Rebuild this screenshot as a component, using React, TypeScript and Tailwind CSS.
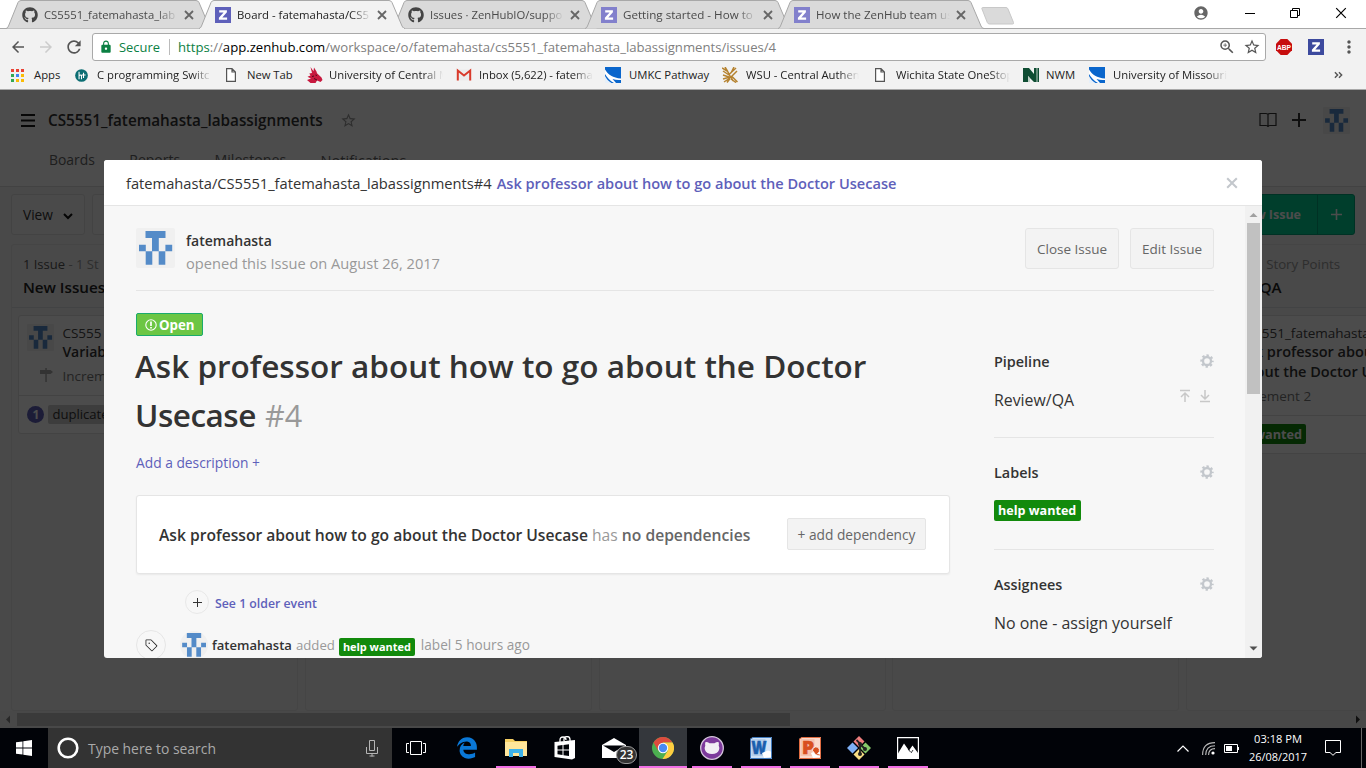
import React from 'react';
import { FaGithub, FaEdgeLegacy } from 'react-icons/fa';
import { MdAccountCircle, MdZoomIn, MdStarBorder, MdLock, MdArrowBack, MdArrowForward, MdRefresh, MdMoreVert } from 'react-icons/md';
import { GoTag } from 'react-icons/go';

const FADE = '[mask-image:linear-gradient(to_right,black_calc(100%_-_20px),transparent)]';

function Identicon({ className }: { className: string }) {
  return (
    <svg viewBox="0 0 39 40" className={className} preserveAspectRatio="none">
      <rect width="39" height="40" rx="2" fill="#f0f0f0" />
      <path
        fill="#548bc8"
        d="M9.500 3h20v7h-20z M16 9.800h6.800v13.500h-6.800z M3 16.700h6.800v6.600H3z M29.400 16.700h6.800v6.600h-6.800z M9.700 23.300h6.600v13.500h-6.600z M22.700 23.300h6.600v13.500h-6.600z"
      />
    </svg>
  );
}

function ZLogo({ className }: { className: string }) {
  return (
    <svg viewBox="0 0 16 16" className={className}>
      <rect width="16" height="16" fill="currentColor" />
      <path d="M4.200 3.300h7.700v2L7.300 10.500h4.800v2.200H3.900v-2l4.700-5.200H4.200z" fill="#fff" />
    </svg>
  );
}

function Close({ className }: { className: string }) {
  return (
    <svg viewBox="0 0 10 10" className={className} fill="none" stroke="currentColor">
      <path d="M1 1l8 8M9 1l-8 8" />
    </svg>
  );
}

type TabProps = { title: string; kind: 'github' | 'zenhub'; active?: boolean; text: string };

function Tab({ title, kind, active, text }: TabProps) {
  return (
    <div className={`relative -mr-[13px] flex h-[29px] w-[206px] shrink-0 items-center pl-4 ${active ? 'z-10' : ''}`}>
      <svg viewBox="0 0 206 29" className="absolute inset-0 h-full w-full">
        <path
          d="M0 28.500 Q1.500 28.500 2.500 26 L12 2.500 Q13 .5 15 .5 H190 Q192 .5 193 2.500 L203 26 Q204 28.500 206 28.500"
          fill={active ? '#f2f2f2' : '#dadada'}
          stroke="#a8a8a8"
        />
        {active && <path d="M1 28.500H205" stroke="#f2f2f2" />}
      </svg>
      <div className="relative flex items-center">
        {kind === 'github' ? (
          <FaGithub className="h-4 w-4 text-[#444]" />
        ) : (
          <ZLogo className={active ? 'h-4 w-4 text-[#5e60ba]' : 'h-4 w-4 text-[#8280cc]'} />
        )}
        <span className={`ml-1.5 w-[134px] overflow-hidden whitespace-nowrap leading-5 ${text} ${active ? 'text-[#222]' : 'text-[#4a4a4a]'} ${FADE}`}>
          {title}
        </span>
        <Close className="ml-[6px] h-[10px] w-[10px] stroke-[1.800] text-[#666]" />
      </div>
    </div>
  );
}

function PageIcon() {
  return (
    <svg viewBox="0 0 10 14" className="ml-[2px] mr-[5px] h-[14px] w-[10px]" fill="#fff" stroke="#555">
      <path d="M.6.6h5.400l3.400 3.400v9.400H.6z M6 .6v3.400h3.400" strokeWidth="1.200" />
    </svg>
  );
}

function SwooshIcon() {
  return (
    <svg viewBox="0 0 16 16" className="h-4 w-4">
      <rect width="16" height="16" fill="#0a66cc" />
      <path d="M0 2.500C3 7.500 8 11 16 11.500V13c-3 .3-6 0-8.500-1L11 16H9C5 14 2 10.500 0 7z" fill="#fff" />
      <path d="M0 9c1.500 3 3.500 5.200 6.500 7H0z" fill="#e6f0fa" />
    </svg>
  );
}

function Bookmark({ icon, label, box }: { icon: React.ReactNode; label: string; box: string }) {
  return (
    <div className="flex shrink-0 items-center gap-1.5">
      {icon}
      <span className={`overflow-hidden whitespace-nowrap text-[11.300px] leading-5 text-[#222] ${box}`}>{label}</span>
    </div>
  );
}

function Browser() {
  return (
    <div className="h-[90px] w-full border-b border-[#a9a9a9] bg-[#f2f2f2] text-black">
      <div className="flex h-[29px] items-start bg-white shadow-[inset_0_-1px_0_#a8a8a8]">
        <div className="flex pl-[6px]">
          <Tab kind="github" title="CS5551_fatemahasta_lab" text="text-[11.300px]" />
          <Tab kind="zenhub" title="Board - fatemahasta/CS5" text="text-[11.350px]" active />
          <Tab kind="github" title="Issues · ZenHubIO/suppo" text="text-[11.300px]" />
          <Tab kind="zenhub" title="Getting started - How to" text="text-[11.640px]" />
          <Tab kind="zenhub" title="How the ZenHub team us" text="text-[11.500px]" />
        </div>
        <svg viewBox="0 0 34 18" className="ml-[10px] mt-[7px] h-[18px] w-[34px]">
          <path d="M1.500.5H25q1.500 0 2 1.500l5.500 13.500q.5 1.500-1 1.500H8.500Q7 17 6.300 15.500L1 2Q.5.5 1.500.5z" fill="#dadada" stroke="#c8c8c8" />
        </svg>
        <div className="ml-auto flex h-[26px] items-center pr-[19px]">
          <MdAccountCircle className="mr-[35px] h-4 w-4 text-[#666]" />
          <svg viewBox="0 0 12 12" className="mr-[33px] h-3 w-3"><path d="M1 6.500h10" stroke="#000" /></svg>
          <svg viewBox="0 0 12 12" className="mr-[34px] h-3 w-3" fill="none" stroke="#000"><path d="M1.500 3.500h7v7h-7z M3.500 3.500v-2h7v7h-2" /></svg>
          <Close className="h-[12px] w-[12px] stroke-[1] text-black" />
        </div>
      </div>
      <div className="flex h-[36px] items-center pl-[9px]">
        <MdArrowBack className="h-[18px] w-[18px] text-[#555]" />
        <MdArrowForward className="ml-[10px] h-[18px] w-[18px] text-[#ccc]" />
        <MdRefresh className="ml-[9px] h-[20px] w-[20px] text-[#555]" />
        <div className="ml-[8px] flex h-[28px] w-[1174px] items-center rounded-[3px] border border-[#a9a9a9] bg-white pl-[6px]">
          <MdLock className="h-[14px] w-[14px] text-[#0b8043]" />
          <span className="ml-[6px] w-[50px] whitespace-nowrap text-[12.900px] leading-5 text-[#0b8043]">Secure</span>
          <span className="mr-[8px] h-4 w-px bg-[#bbb]" />
          <span className="whitespace-nowrap text-[13.150px] leading-5 text-[#808080]">
            <span className="text-[#0b8043]">https</span>://<span className="text-black">app.zenhub.com</span>/workspace/o/fatemahasta/cs5551_fatemahasta_labassignments/issues/4
          </span>
          <MdZoomIn className="ml-auto h-[18px] w-[18px] text-[#555]" />
          <MdStarBorder className="ml-[7px] mr-[4px] h-[18px] w-[18px] text-[#555]" />
        </div>
        <svg viewBox="0 0 16 16" className="ml-[10px] h-4 w-4">
          <path d="M4.700 0h6.600L16 4.700v6.600L11.300 16H4.700L0 11.300V4.700z" fill="#c70d0d" />
          <text x="8" y="10.800" fontSize="8" fontWeight="700" textAnchor="middle" fill="#fff" fontFamily="Liberation Sans, sans-serif" textLength="14" lengthAdjust="spacingAndGlyphs">ABP</text>
        </svg>
        <ZLogo className="ml-4 h-4 w-4 text-[#3d4a9e]" />
        <MdMoreVert className="ml-[15px] h-5 w-5 text-[#555]" />
      </div>
      <div className="flex h-[20px] items-center pl-[10px]">
        <div className="flex items-center">
          <svg viewBox="0 0 13 13" className="mr-[10px] h-[13px] w-[14px]" shapeRendering="crispEdges">
            <path d="M0 0h3v3H0zM5 0h3v3H5zM10 0h3v3h-3z" fill="#ea4335" />
            <path d="M0 5h3v3H0zM0 10h3v3H0z" fill="#34a853" />
            <path d="M5 5h3v3H5z" fill="#4285f4" />
            <path d="M10 5h3v3h-3zM5 10h3v3H5zM10 10h3v3h-3z" fill="#fbbc05" />
          </svg>
          <span className="w-[41px] text-[11.300px] leading-5 text-[#222]">Apps</span>
        </div>
        <Bookmark
          icon={
            <svg viewBox="0 0 16 16" className="mr-[3px] h-[13px] w-[13px]">
              <circle cx="8" cy="8" r="7.800" fill="#0c6e73" />
              <path d="M5 3.500v9M5 8.500q1.500-2 3 0v4M10.500 4.500v6.500M8 7.500h5" stroke="#fff" strokeWidth="1.300" fill="none" />
            </svg>
          }
          label="C programming Switc"
          box={`w-[115px] ${FADE}`}
        />
        <div className="ml-[12px]" />
        <Bookmark icon={<PageIcon />} label="New Tab" box="w-[48px] tracking-[-0.050px]" />
        <div className="ml-[12px]" />
        <Bookmark
          icon={
            <svg viewBox="0 0 16 16" className="h-4 w-4">
              <path d="M3.500 0l3 4.200L7 .5l2.500 4 .5 1.800 4.500 4.200 1 2.500-2 2-3.500-1.500-1.500 2.500H3.500L0 13l4-1.500-3.500-1.800 3-1.200-1.200-2L5 6z" fill="#c8193f" />
              <path d="M8.500 8l1.500.5M7 11.500l3 1.500M5 9.500l2-.5" stroke="#4a0b1c" />
            </svg>
          }
          label="University of Central M"
          box={`w-[114px] ${FADE}`}
        />
        <div className="ml-[13px]" />
        <Bookmark
          icon={
            <svg viewBox="0 0 16 16" className="mr-[1px] h-4 w-4">
              <path d="M1 2.500h14v11H1z" fill="#ececec" />
              <path d="M1.800 13.500v-10L8 8.500l6.200-5v10" fill="none" stroke="#d93a2b" strokeWidth="2" />
            </svg>
          }
          label="Inbox (5,622) - fatema"
          box={`w-[114px] tracking-[-0.050px] ${FADE}`}
        />
        <div className="ml-[12px]" />
        <Bookmark icon={<SwooshIcon />} label="UMKC Pathway" box="w-[81px] ml-[2px]" />
        <div className="ml-[12px]" />
        <Bookmark
          icon={
            <svg viewBox="0 0 16 16" className="h-4 w-4" fill="none" stroke="#b5822f" strokeWidth="1.500">
              <path d="M0 1l5 3M3 0l3 5M9 6l3-6M6.500 8L14 1M9 10l6-6M1 8l6 2M1 12l7-2M2 15l6-4M5 15.500l3-4M9 10l2 4M10 9.500l5.500 5.500M6 5l3 6M1 4l6 4M9 12l5 3.500" />
            </svg>
          }
          label="WSU - Central Authen"
          box={`w-[113px] ml-[2px] ${FADE}`}
        />
        <div className="ml-[14px]" />
        <Bookmark icon={<PageIcon />} label="Wichita State OneStop" box={`w-[114px] ${FADE}`} />
        <div className="ml-[13px]" />
        <Bookmark
          icon={
            <svg viewBox="0 0 16 16" className="h-4 w-4">
              <path d="M0 1h6l5 6V1h5v14h-5L5 9v6H0z" fill="#0f4d33" />
              <path d="M5 9v6h2v-3.500zM13.500 1v14h1V1z" fill="#bcd0c5" />
            </svg>
          }
          label="NWM"
          box="w-[32px] ml-[1px]"
        />
        <div className="ml-[11px]" />
        <Bookmark icon={<SwooshIcon />} label="University of Missouri" box={`w-[114px] ml-[2px] ${FADE}`} />
        <svg viewBox="0 0 10 8" className="ml-auto mr-[23px] h-[8px] w-[9px]" fill="none" stroke="#555" strokeWidth="1.600">
          <path d="M1 1l3 3-3 3M5.500 1l3 3-3 3" />
        </svg>
      </div>
    </div>
  );
}

function Column({ children }: { children?: React.ReactNode }) {
  return <div className="h-[467px] w-[287px] shrink-0 rounded-[3px] border border-[#e6e6e6] bg-[#f3f3f3]">{children}</div>;
}

function Workspace() {
  return (
    <div className="flex h-[638px] w-full flex-col overflow-hidden bg-[#f3f3f3] text-[#333]">
      <div className="flex h-[97px] flex-col border-b border-[#dcdcdc] bg-white">
        <div className="flex h-[60px] items-center pl-[19px] pr-[16px]">
          <svg viewBox="0 0 14 13" className="ml-[2px] h-[13px] w-[14px]" stroke="#1a1a1a" strokeWidth="2"><path d="M0 1h14M0 6.500h14M0 12h14" /></svg>
          <span className="ml-[13px] whitespace-nowrap text-[15.280px] font-semibold leading-6">CS5551_fatemahasta_labassignments</span>
          <MdStarBorder className="ml-[17px] h-[17px] w-[17px] text-[#999]" />
          <svg viewBox="0 0 18 16" className="ml-auto h-[16px] w-[18px]" fill="none" stroke="#333" strokeWidth="1.200">
            <path d="M1 1.500h6q2 0 2 1 0-1 2-1h6v12h-6q-2 0-2 1.500 0-1.500-2-1.500H1zM9 2.500v12" />
          </svg>
          <svg viewBox="0 0 14 14" className="ml-[15px] h-[14px] w-[14px]" stroke="#333" strokeWidth="2"><path d="M7 0v14M0 7h14" /></svg>
          <Identicon className="ml-[17px] h-[27px] w-[27px]" />
        </div>
        <div className="flex gap-[34.400px] pl-[49px] text-[13.900px] leading-5 text-[#666]">
          <span>Boards</span><span className="text-[14px]">Reports</span><span className="text-[14.200px]">Milestones</span><span className="text-[14.600px]">Notifications</span>
        </div>
      </div>
      <div className="flex h-[57px] items-start pl-[11px] pr-[11px] pt-[7px]">
        <div className="flex h-[41px] w-[74px] items-center rounded-[3px] border border-[#e0e0e0] bg-[#f8f8f8] pl-[11px] text-[13.700px] leading-5">
          View
          <svg viewBox="0 0 10 7" className="ml-[10px] mt-[3px] h-[7px] w-[10px]" fill="none" stroke="#111" strokeWidth="2"><path d="M1 1l4 4 4-4" /></svg>
        </div>
        <div className="ml-[7px] h-[41px] w-[90px] rounded-[3px] border border-[#e0e0e0] bg-[#f8f8f8]" />
        <div className="ml-auto flex h-[41px] rounded-[3px] border border-[#00a578] bg-[#00d095] text-white">
          <div className="flex items-center pl-3 pr-[16px] text-[12.500px] font-bold leading-5">New Issue</div>
          <div className="flex w-[37px] items-center justify-center border-l border-[#00a578]">
            <svg viewBox="0 0 11 11" className="h-[11px] w-[11px]" stroke="#fff" strokeWidth="1.600"><path d="M5.500 0v11M0 5.500h11" /></svg>
          </div>
        </div>
      </div>
      <div className="flex w-[1480px] gap-[6.700px] pl-[11.400px]">
        <Column>
          <div className="h-[63px] border-b border-[#dcdfe3] pl-[10.500px] pt-[9px]">
            <div className="whitespace-nowrap text-[13px] leading-5 text-[#999]"><span className="text-[#555]">1 Issue</span> - 1 St</div>
            <div className="mt-px text-[15.200px] font-semibold leading-6 text-[#222]">New Issues</div>
          </div>
          <div className="ml-[6px] mt-[7px] w-[272px] rounded-[3px] border border-[#e0e0e0] bg-white">
            <div className="flex h-[79px] pl-[8px] pt-[8px]">
              <Identicon className="h-[27px] w-[27px]" />
              <div className="ml-[8px] whitespace-nowrap text-[13.500px]">
                <div className="leading-[19px] text-[#444]">CS555</div>
                <div className="text-[14px] font-semibold leading-[18px]">Variab</div>
                <div className="-ml-[24px] mt-[6px] flex items-center leading-[19px] text-[#777]">
                  <svg viewBox="0 0 13 14" className="mb-[3px] ml-[2px] mr-[9px] h-[14px] w-[13px]" fill="#aaa"><path d="M0 2h10.500l2.500 2-2.500 2H0zM5.300 0h1.500v14H5.300z" /></svg>
                  Increm
                </div>
              </div>
            </div>
            <div className="flex h-[38px] items-center border-t border-[#e0e0e0] pl-[8px]">
              <span className="flex h-[17px] w-[17px] items-center justify-center rounded-full bg-[#5e60ba] text-[12px] font-bold text-white">1</span>
              <span className="ml-[4px] rounded-[2px] bg-[#ccc] px-[4px] text-[13.100px] font-medium leading-[19px] text-[#333]">duplicate</span>
            </div>
          </div>
        </Column>
        <Column /><Column /><Column />
        <Column>
          <div className="h-[63px] border-b border-[#dcdfe3] pl-[11px] pt-[9px]">
            <div className="whitespace-nowrap pl-[68px] text-[13.270px] leading-5 text-[#999]">Story Points</div>
            <div className="mt-px whitespace-nowrap pl-[4px] text-[15.100px] font-semibold leading-6 text-[#222]">Review/QA</div>
          </div>
          <div className="ml-[6px] mt-[7px] w-[272px] rounded-[3px] border border-[#e0e0e0] bg-white">
            <div className="flex h-[99px] pl-[8px] pt-[8px]">
              <Identicon className="h-[27px] w-[27px]" />
              <div className="ml-[9px] whitespace-nowrap text-[13.500px]">
                <div className="leading-[18px] text-[#444]">CS5551_fatemahasta_</div>
                <div className="text-[14.500px] font-semibold leading-[19.500px]">Ask professor about<br />about the Doctor Use</div>
                <div className="mt-[6px] -ml-[3px] leading-[19px] text-[#777]">Increment 2</div>
              </div>
            </div>
            <div className="flex h-[38px] items-center border-t border-[#e0e0e0] pl-[25px]">
              <span className="mb-[1px] rounded-[2px] bg-[#128a0c] px-[4px] text-[12.700px] font-bold leading-[20px] text-white">help wanted</span>
            </div>
          </div>
        </Column>
      </div>
      <div className="mt-auto flex h-[17px] items-center bg-[#f1f1f1]">
        <svg viewBox="0 0 17 17" className="h-[17px] w-[17px]"><path d="M6 8.500l4-4v8z" fill="#888" /></svg>
        <div className="h-[13px] w-[773px] bg-[#c1c1c1]" />
        <svg viewBox="0 0 17 17" className="ml-auto h-[17px] w-[17px]"><path d="M11 8.500l-4-4v8z" fill="#333" /></svg>
      </div>
    </div>
  );
}

function SideTitle({ children }: { children: React.ReactNode }) {
  return (
    <div className="flex h-5 items-center justify-between text-[14.400px] font-semibold leading-5">
      {children}
      <svg viewBox="0 0 14 14" className="mb-[3px] h-[14px] w-[14px]" fill="none" stroke="#c3c7cc">
        <circle cx="7" cy="7" r="4" strokeWidth="2.300" />
        <circle cx="7" cy="7" r="5.700" strokeWidth="2" strokeDasharray="2.400 2.076" strokeDashoffset="1.200" />
      </svg>
    </div>
  );
}

function Modal() {
  return (
    <div className="absolute left-[104px] top-[70px] flex h-[498px] w-[1158px] flex-col overflow-hidden rounded-[3px] bg-[#f7f7f7] text-[#333]">
      <div className="flex h-[46px] shrink-0 items-center border-b border-[#e5e5e5] bg-white pl-[22px] pr-[24px] leading-5">
        <span className="whitespace-nowrap text-[14.700px] font-medium">fatemahasta/CS5551_fatemahasta_labassignments#4</span>
        <span className="ml-[5px] whitespace-nowrap text-[14.580px] font-semibold text-[#5e60ba]">Ask professor about how to go about the Doctor Usecase</span>
        <Close className="ml-auto h-[12px] w-[12px] stroke-[1.700] text-[#c3c7cc]" />
      </div>
      <div className="flex min-h-0 flex-1">
        <div className="flex w-[1141px] flex-col overflow-hidden pl-[32px] pr-[31px] pt-[22px]">
          <div className="flex h-[63px] shrink-0 items-start border-b border-[#e5e5e5]">
            <Identicon className="h-[40px] w-[39px]" />
            <div className="ml-[11px] pt-[2px]">
              <div className="text-[14px] font-semibold leading-[22px]">fatemahasta</div>
              <div className="text-[14.630px] leading-[23px] text-[#999]">opened this Issue on August 26, 2017</div>
            </div>
            <button className="ml-auto h-[41px] w-[94px] rounded-[3px] border border-[#e5e5e5] bg-[#f3f3f3] pt-[2px] text-[13.490px] text-[#666]">Close Issue</button>
            <button className="ml-[11px] h-[41px] w-[84px] rounded-[3px] border border-[#e5e5e5] bg-[#f3f3f3] pt-[2px] text-[13.500px] text-[#666]">Edit Issue</button>
          </div>
          <div className="flex">
            <div className="w-[814px] pt-[22px]">
              <div className="flex h-[23px] w-[67px] items-center rounded-[2px] border border-[#1aab6c] bg-[#6cc644] pl-[8px] text-[13.300px] font-bold leading-5 text-white">
                <svg viewBox="0 0 12 12" className="mr-[2px] h-[12px] w-[12px]" fill="none" stroke="#fff">
                  <circle cx="6" cy="6" r="5.200" strokeWidth="1.100" /><path d="M6 2.500v4.500M6 8v1.600" strokeWidth="1.700" />
                </svg>
                Open
              </div>
              <h1 className="-ml-px mt-[5px] h-[98px] whitespace-nowrap text-[31.500px] font-semibold leading-[49px]">
                Ask professor about how to go about the Doctor<br /><span className="tracking-[-0.500px]">Usecase</span> <span className="ml-px text-[30.500px] font-normal leading-none text-[#999]">#4</span>
              </h1>
              <div className="mt-[14px] text-[13.790px] leading-5 text-[#5e60ba]">Add a description +</div>
              <div className="mt-[22px] flex h-[79px] items-center rounded-[3px] border border-[#e5e5e5] bg-white pl-[22px] pr-[23px] shadow-[0_1px_2px_rgba(0,0,0,0.06)]">
                <span className="whitespace-nowrap text-[15.650px] font-semibold leading-6">
                  Ask professor about how to go about the Doctor Usecase <span className="font-normal text-[#999]">has</span> <span className="text-[#666]">no dependencies</span>
                </span>
                <button className="ml-auto mb-px h-[32px] w-[139px] whitespace-nowrap rounded-[2px] border border-[#e5e5e5] bg-[#f3f3f3] pt-[2px] text-[13.730px] text-[#666]">+ add dependency</button>
              </div>
              <div className="ml-[49px] mt-[16px] flex h-[24px] items-center">
                <span className="flex h-[24px] w-[24px] items-center justify-center rounded-full border border-[#e8e8e8]">
                  <svg viewBox="0 0 9 9" className="h-[9px] w-[9px]" stroke="#333"><path d="M4.500 0v9M0 4.500h9" /></svg>
                </span>
                <span className="ml-[6px] mt-[3px] text-[12.300px] font-semibold leading-5 text-[#5e60ba]">See 1 older event</span>
              </div>
              <div className="mt-[16px] flex h-[30px] items-center whitespace-nowrap text-[13.400px] leading-5 text-[#999]">
                <span className="flex h-[30px] w-[30px] items-center justify-center rounded-full border border-[#e5e5e5]"><GoTag className="h-[13px] w-[13px] text-[#222]" /></span>
                <Identicon className="ml-[14px] h-[28px] w-[28px] rounded-full" />
                <span className="ml-[4px] text-[13.060px] font-semibold text-[#333]">fatemahasta</span>
                <span className="ml-[4px] text-[13.210px]">added</span>
                <span className="ml-[4px] mt-[3px] h-[18px] rounded-[2px] bg-[#128a0c] px-[4px] text-[10.930px] font-bold leading-[17px] text-white">help wanted</span>
                <span className="ml-[6px] text-[13.630px]">label 5 hours ago</span>
              </div>
            </div>
            <div className="ml-[44px] w-[220px] pt-[61px]">
              <div className="h-[86px] border-b border-[#e5e5e5]">
                <SideTitle>Pipeline</SideTitle>
                <div className="mt-[17px] flex items-center text-[15.860px] leading-5">
                  Review/QA
                  <svg viewBox="0 0 32 14" className="mb-[8px] ml-auto mr-[3px] h-[14px] w-[32px]" fill="none" stroke="#c8c8c8" strokeWidth="1.500">
                    <path d="M1 1.500h10M6 13V4M2 8l4-4 4 4M21 12.500h10M26 1v9M22 6l4 4 4-4" />
                  </svg>
                </div>
              </div>
              <div className="h-[112px] border-b border-[#e5e5e5] pt-[25px]">
                <SideTitle>Labels</SideTitle>
                <span className="mt-[17px] inline-block h-[21px] w-[87px] rounded-[2px] bg-[#128a0c] px-[4px] text-[12.600px] font-bold leading-[22px] text-white">help wanted</span>
              </div>
              <div className="pt-[25px]">
                <SideTitle>Assignees</SideTitle>
                <div className="mt-[18px] text-[15.950px] leading-5">No one - assign yourself</div>
              </div>
            </div>
          </div>
        </div>
        <div className="flex w-[17px] flex-col items-center bg-[#f1f1f1]">
          <svg viewBox="0 0 17 17" className="h-[17px] w-[17px]"><path d="M8.500 7l4 4h-8z" fill="#a0a0a0" /></svg>
          <div className="h-[171px] w-[13px] bg-[#c1c1c1]" />
          <svg viewBox="0 0 17 17" className="mt-auto h-[17px] w-[17px]"><path d="M8.500 9.500l4-4h-8z" fill="#505050" /></svg>
        </div>
      </div>
    </div>
  );
}

function Task({ children, open, active }: { children: React.ReactNode; open?: boolean; active?: boolean }) {
  return (
    <div className={`flex h-full w-[48px] shrink-0 flex-col items-center ${active ? 'bg-[#34373c]' : ''}`}>
      <div className="flex flex-1 items-center justify-center pt-[2px]">{children}</div>
      {open && <div className={`h-[2px] bg-[#f06fe4] ${active ? 'w-[48px]' : 'w-[40px]'}`} />}
      {!open && <div className="h-[2px]" />}
    </div>
  );
}

function OfficeIcon({ letter, color, light }: { letter: string; color: string; light: string }) {
  return (
    <svg viewBox="0 0 22 22" className="h-[22px] w-[22px]">
      <path d="M0 2L3 0h19v22H0z" fill={light} />
      <path d="M1.500 2h14v17h-14z" fill={color} opacity=".15" />
      <text x="9" y="16.500" textAnchor="middle" fontFamily="Open Sans, sans-serif" fontSize="18" fontWeight="800" fill={color} stroke={color} strokeWidth=".6" textLength={letter === 'W' ? 15 : 12} lengthAdjust="spacingAndGlyphs">{letter}</text>
      <path d="M12 16l6-2.500 4 1.500V20l-8 1z" fill="#fff" />
      {letter === 'P' && <path d="M13.500 13.500a3.500 3.500 0 1 1 5 3l3 1-1 1.500-4-1.500z" fill={color} stroke="#fff" strokeWidth=".8" />}
      <path d="M.5 2L3 .5h18.500v21H.5z" fill="none" stroke={color} opacity=".8" />
    </svg>
  );
}

function Taskbar() {
  return (
    <div className="flex h-[40px] w-full bg-[#010308] text-white">
      <div className="flex w-[48px] items-center justify-center">
        <svg viewBox="0 0 16 16" className="h-4 w-4" fill="#fff"><path d="M0 2.300l6.500-.9v6.200H0zM7.300 1.200L16 0v7.600H7.300zM0 8.400h6.500v6.200L0 13.700zM7.300 8.400H16V16l-8.700-1.200z" /></svg>
      </div>
      <div className="flex w-[344px] items-center bg-[#333] pl-[9px] pr-[14px]">
        <svg viewBox="0 0 22 22" className="h-[22px] w-[22px]" fill="none"><circle cx="11" cy="11" r="9.300" stroke="#fff" strokeWidth="2.600" /></svg>
        <span className="ml-[9px] mt-px text-[13.910px] leading-5 text-[#aaa]">Type here to search</span>
        <svg viewBox="0 0 12 17" className="ml-auto h-[17px] w-[12px]" fill="none" stroke="#b5b5b5">
          <path d="M3.500.5h5v10h-5zM.5 7v6.500h11V7M6 13.500v3M3.500 16h5" />
        </svg>
      </div>
      <div className="mr-[3px] flex"><Task>
        <svg viewBox="0 0 20 14" className="h-[14px] w-[20px]" fill="none" stroke="#fff"><path d="M4.500.500h11v13h-11zM3 2.500H.5v9H3M17 2.500h2.500v9H17" /></svg>
      </Task></div>
      <div className="flex gap-px">
        <Task><FaEdgeLegacy className="h-[22px] w-[22px] text-[#0a78d7]" /></Task>
        <Task open>
          <svg viewBox="0 0 22 20" className="h-[20px] w-[22px]">
            <path d="M0 1h8l2 2h12v15H0z" fill="#f5cf63" /><path d="M0 4h22v14H0z" fill="#ffe69b" />
            <path d="M4 19v-8h14v8h-4v-4H8v4z" fill="#3db2ea" />
          </svg>
        </Task>
        <Task>
          <svg viewBox="0 0 22 24" className="h-[24px] w-[22px]">
            <path d="M6 7V4q0-3 3-3t3 3M10 5V3.500Q10 .6 13 .6t3 3V5" fill="none" stroke="#fff" strokeWidth="1.300" />
            <path d="M.5 6L21 4v18l-3 1.500L.5 21z" fill="#fff" />
            <path d="M3.500 9.700l5-.6v4.400h-5zM9.500 9l5.500-.7v5.200H9.500zM3.500 14.500h5V19l-5-.7zM9.500 14.500H15V20l-5.500-.8z" fill="#010308" />
          </svg>
        </Task>
        <Task>
          <div className="relative">
            <svg viewBox="0 0 24 20" className="h-[20px] w-[24px]">
              <path d="M0 7L12 0l12 7v13H0z" fill="#fff" /><path d="M1 7.500h22L12 14z" fill="#010308" />
            </svg>
            <span className="absolute left-[14px] top-[8px] flex h-[18px] w-[21px] items-center justify-center rounded-full border border-[#999] bg-[#333] text-[12px] font-semibold leading-none">23</span>
          </div>
        </Task>
        <Task open active>
          <svg viewBox="0 0 22 22" className="h-[22px] w-[22px]">
            <circle cx="11" cy="11" r="11" fill="#4caf50" />
            <path d="M1.500 5.500A11 11 0 0 1 20.500 5.500H11L6.200 13.800z" fill="#dd4b3e" />
            <path d="M20.500 5.500A11 11 0 0 1 10.500 22L15.800 13.700 11 5.500z" fill="#ffcd40" />
            <circle cx="11" cy="11" r="5.200" fill="#fff" /><circle cx="11" cy="11" r="4.200" fill="#4a8af4" />
          </svg>
        </Task>
        <Task open>
          <svg viewBox="0 0 24 24" className="h-[24px] w-[24px]">
            <circle cx="12" cy="12" r="11.300" fill="#7d3a9c" stroke="#d5c5dc" strokeWidth="1.300" />
            <path d="M5.500 6q2-.3 4 1.300h5q2-1.600 4-1.300.8 2 .2 3.500 1 2 .3 4.500-1.500 4-7 4t-7-4q-.7-2.500.3-4.500-.6-1.500.2-3.500z" fill="#f2eef4" />
          </svg>
        </Task>
        <Task open><OfficeIcon letter="W" color="#1b5fae" light="#cfe2f6" /></Task>
        <Task open><OfficeIcon letter="P" color="#d9501e" light="#fbd9cb" /></Task>
        <Task open>
          <svg viewBox="0 0 24 24" className="h-[24px] w-[24px]">
            <path d="M12 0l5.500 5.500L12 11 6.500 5.500z" fill="#f07f7f" /><path d="M5.500 6.500L11 12l-5.500 5.500L0 12z" fill="#7eb0f5" />
            <path d="M18.500 6.500L24 12l-5.500 5.500L13 12z" fill="#86c96a" /><path d="M12 13l5.500 5.500L12 24l-5.500-5.500z" fill="#f8de84" />
            <path d="M9.500 4l3.500 3.500v10M13 8l5 5" stroke="#222" strokeWidth="1.800" fill="none" />
            <circle cx="13" cy="8" r="2" fill="#222" /><circle cx="13" cy="18" r="2" fill="#222" /><circle cx="18" cy="13" r="2" fill="#222" />
          </svg>
        </Task>
        <Task open>
          <svg viewBox="0 0 22 22" className="h-[22px] w-[22px]">
            <path d="M.6.6h20.800v20.800H.6z" fill="#010308" stroke="#fff" strokeWidth="1.200" />
            <path d="M1 16.500L7 6.500l5 7 3.500-5L21 16v5H1z" fill="#fff" />
            <path d="M11 12l2.500 3M16 13l-2 3" stroke="#010308" strokeWidth=".8" />
          </svg>
        </Task>
      </div>
      <div className="ml-auto flex items-center">
        <svg viewBox="0 0 12 7" className="h-[7px] w-[12px]" fill="none" stroke="#fff" strokeWidth="1.200"><path d="M.5 6.500L6 1l5.500 5.500" /></svg>
        <svg viewBox="0 0 13 13" className="ml-[13px] h-[13px] w-[13px]" fill="none" stroke="#bbb" strokeWidth="1.100">
          <path d="M.6 13Q.6.6 13 .6M3.700 13Q3.700 3.700 13 3.700M6.600 13q0-6.400 6.400-6.400" /><circle cx="11" cy="11" r="1.600" fill="#fff" stroke="none" />
        </svg>
        <svg viewBox="0 0 15 9" className="ml-[9px] h-[9px] w-[15px]"><path d="M.5.5h13v8H.5z" fill="none" stroke="#fff" /><path d="M2 2h6v5H2zM14 3h1v3h-1z" fill="#fff" /></svg>
        <div className="ml-[9px] w-[60px] text-center leading-[18px]">
          <div className="text-[11.130px]">03:18 PM</div>
          <div className="text-[10.930px]">26/08/2017</div>
        </div>
        <svg viewBox="0 0 16 16" className="ml-[17px] h-4 w-4" fill="none" stroke="#fff"><path d="M.5.5h15v12H11L8 15.300 5 12.500H.5z" /></svg>
        <div className="ml-[20px] h-full w-px bg-[#666]" />
        <div className="w-[4px]" />
      </div>
    </div>
  );
}

export default function App() {
  return (
    <div className="flex h-[768px] w-[1366px] flex-col overflow-hidden font-['Open_Sans',sans-serif]">
      <Browser />
      <div className="relative h-[638px]">
        <Workspace />
        <div className="absolute inset-0 bg-black/70" />
        <Modal />
      </div>
      <Taskbar />
    </div>
  );
}
